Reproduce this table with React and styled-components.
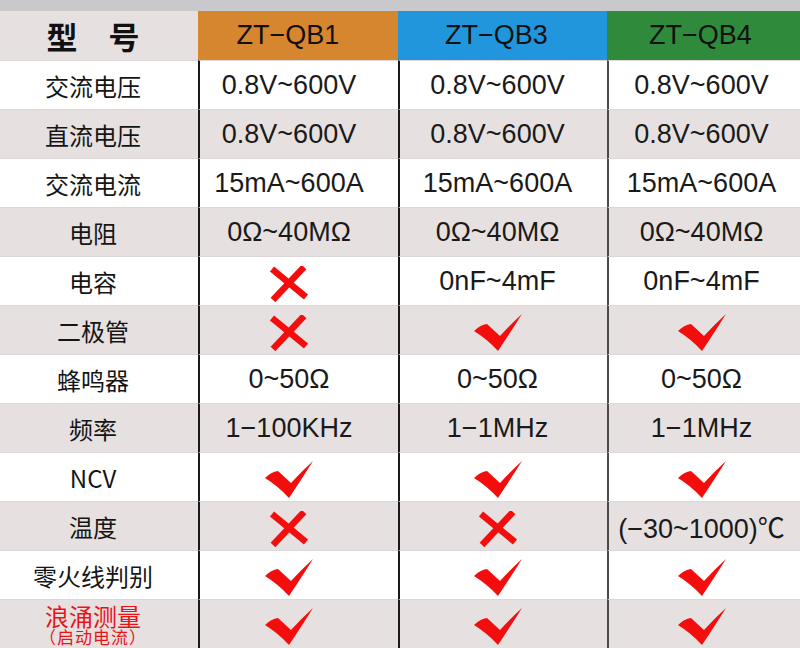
import React from 'react';
import styled, {createGlobalStyle} from 'styled-components';

const GlobalStyle = createGlobalStyle`
  html, body {
    margin: 0;
    padding: 0;
    background: #fff;
  }
  body {
    font-family: "Liberation Sans", "Noto Sans CJK SC", sans-serif;
  }
`;

const X = 'x';
const V = 'v';

const models = [
  {name: 'ZT−QB1', color: '#d5862e'},
  {name: 'ZT−QB3', color: '#2196dd'},
  {name: 'ZT−QB4', color: '#2f8b3b'},
];

const rows = [
  ['交流电压', '0.8V~600V', '0.8V~600V', '0.8V~600V'],
  ['直流电压', '0.8V~600V', '0.8V~600V', '0.8V~600V'],
  ['交流电流', '15mA~600A', '15mA~600A', '15mA~600A'],
  ['电阻', '0Ω~40MΩ', '0Ω~40MΩ', '0Ω~40MΩ'],
  ['电容', X, '0nF~4mF', '0nF~4mF'],
  ['二极管', X, V, V],
  ['蜂鸣器', '0~50Ω', '0~50Ω', '0~50Ω'],
  ['频率', '1−100KHz', '1−1MHz', '1−1MHz'],
  ['NCV', V, V, V],
  ['温度', X, X, '(−30~1000)℃'],
  ['零火线判别', V, V, V],
];

// right padding per model column, the content sits a bit left of centre
const padRight = [20, 12, 6];

const CheckMark = () => (
  <Icon width="48" height="38" viewBox="0 0 48 38">
    <path
      d="M0,17 Q6,11 13,10 L26,22 Q37,10 48,0 Q38,16 24,37 Q13,25 0,17 Z"
      fill="#f40d0d"
    />
  </Icon>
);

const CrossMark = () => (
  <Icon width="40" height="36" viewBox="0 0 40 36">
    <path d="M3,3 L37,31" stroke="#f40d0d" strokeWidth="6.5" />
    <path d="M35,1 L4,34" stroke="#f40d0d" strokeWidth="6.5" />
  </Icon>
);

const renderValue = (v) => {
  if (v === V) return <CheckMark />;
  if (v === X) return <CrossMark />;
  return v;
};

const App = () => {
  return (
    <>
      <GlobalStyle />
      <Page>
        <TopBand />
        <Table>
          <HeadLabel>型　号</HeadLabel>
          {models.map((m, i) => (
            <HeadCell key={m.name} $bg={m.color} $pad={padRight[i]}>
              {m.name}
            </HeadCell>
          ))}
          {rows.map((r, ri) => (
            <React.Fragment key={r[0]}>
              <Label $alt={ri % 2 === 1}>{r[0]}</Label>
              {r.slice(1).map((v, ci) => (
                <Cell key={ci} $alt={ri % 2 === 1} $pad={padRight[ci]} $last={ci === 2}>
                  {renderValue(v)}
                </Cell>
              ))}
            </React.Fragment>
          ))}
          <Label $alt>
            <SurgeLabel>
              <SurgeTitle>浪涌测量</SurgeTitle>
              <SurgeNote>（启动电流）</SurgeNote>
            </SurgeLabel>
          </Label>
          {[0, 1, 2].map((ci) => (
            <Cell key={ci} $alt $pad={padRight[ci]} $last={ci === 2}>
              <CheckMark />
            </Cell>
          ))}
        </Table>
      </Page>
    </>
  );
};

const Page = styled.div`
  width: 800px;
  height: 648px;
  overflow: hidden;
  display: flex;
  flex-direction: column;
`;

const TopBand = styled.div`
  height: 11px;
  background: #c9c9cb;
`;

const Table = styled.div`
  display: grid;
  grid-template-columns: 198px 200px 209px 193px;
  grid-auto-rows: 49px;
`;

const HeadLabel = styled.div`
  display: flex;
  align-items: center;
  justify-content: center;
  padding-right: 12px;
  background: #e6e0e0;
  font-family: "Noto Sans CJK SC", sans-serif;
  font-weight: 700;
  font-size: 31px;
  color: #111;
`;

const HeadCell = styled.div`
  display: flex;
  align-items: center;
  justify-content: center;
  padding-right: ${(p) => p.$pad}px;
  background: ${(p) => p.$bg};
  font-size: 27px;
  color: #111;
`;

const Label = styled.div`
  display: flex;
  align-items: center;
  justify-content: center;
  padding-right: 12px;
  background: ${(p) => (p.$alt ? '#e6e0e0' : '#fff')};
  border-top: 1px solid #ddd6d6;
  font-family: "Noto Sans CJK SC", sans-serif;
  font-size: 24px;
  color: #151515;
`;

const Cell = styled.div`
  display: flex;
  align-items: center;
  justify-content: center;
  padding-right: ${(p) => p.$pad}px;
  background: ${(p) => (p.$alt ? '#e6e0e0' : '#fff')};
  border-top: 1px solid #ddd6d6;
  border-left: 2px solid ${(p) => (p.$last ? '#4a4a4a' : '#1a1a1a')};
  font-family: "Liberation Sans", "Noto Sans CJK SC", sans-serif;
  font-size: 27px;
  color: #1a1a1a;
`;

const Icon = styled.svg`
  display: block;
  margin-top: 6px;
`;

const SurgeLabel = styled.div`
  display: flex;
  flex-direction: column;
  align-items: center;
  color: #e8141a;
`;

const SurgeTitle = styled.span`
  font-size: 24px;
  line-height: 25px;
`;

const SurgeNote = styled.span`
  font-size: 17px;
  line-height: 17px;
  letter-spacing: 1px;
`;

export default App;
